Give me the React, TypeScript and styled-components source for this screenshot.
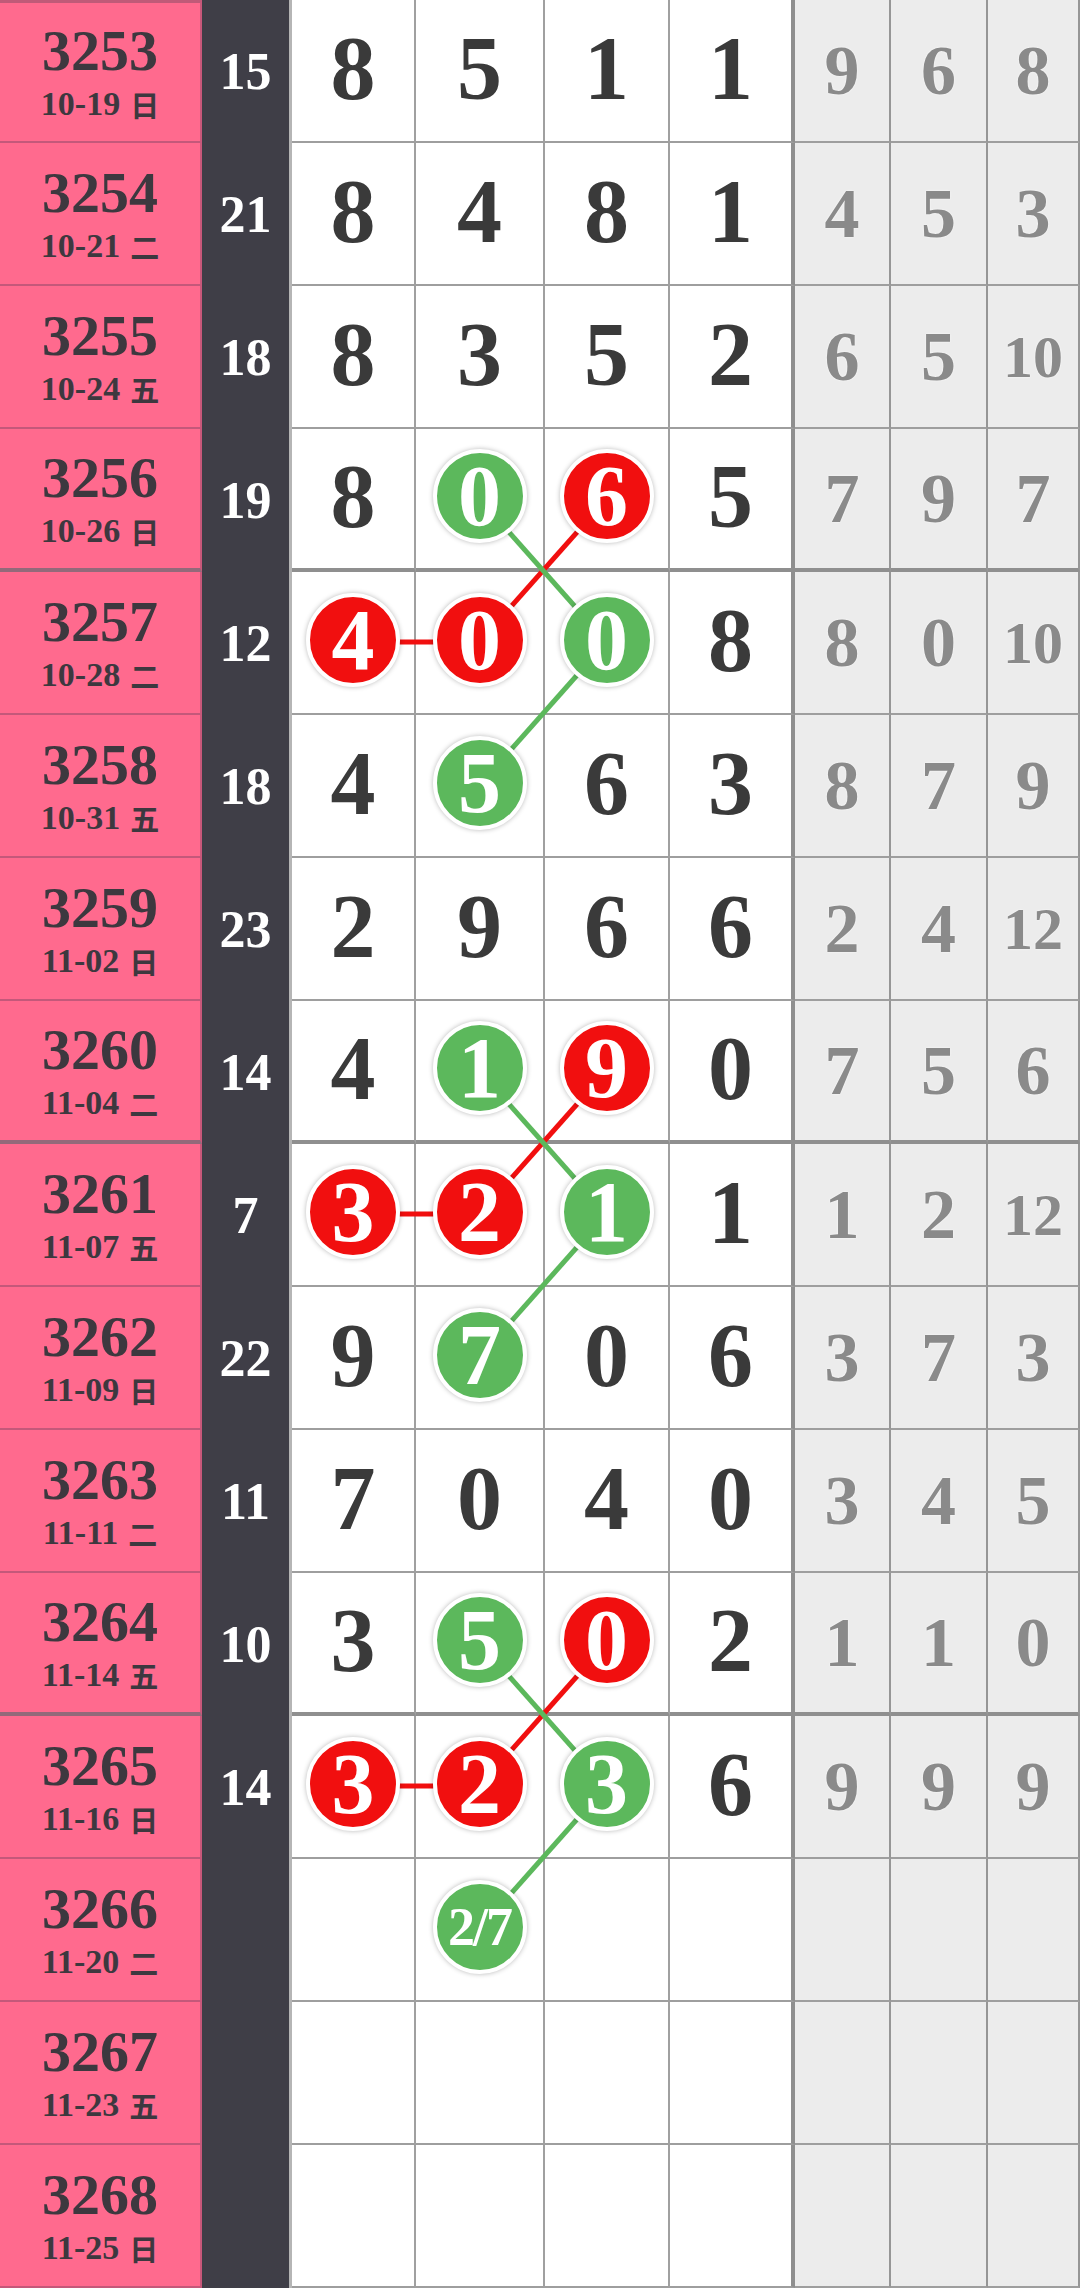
import React from 'react';
import styled, { createGlobalStyle } from 'styled-components';

type Tone = 'red' | 'green';
type Mark = string | { v: string; tone: Tone } | null;

interface Draw {
  period: string;
  date: string;
  week: string;
  sum?: string;
  marks: Mark[];
  miss: string[];
}

const COLS = [202, 90, 124, 129, 125, 125, 96, 97, 92];
const ROW_H = 143;
const GROUP_ENDS = [3, 7, 11];

const r = (v: string): Mark => ({ v, tone: 'red' });
const g = (v: string): Mark => ({ v, tone: 'green' });

const draws: Draw[] = [
  { period: '3253', date: '10-19', week: '日', sum: '15', marks: ['8', '5', '1', '1'], miss: ['9', '6', '8'] },
  { period: '3254', date: '10-21', week: '二', sum: '21', marks: ['8', '4', '8', '1'], miss: ['4', '5', '3'] },
  { period: '3255', date: '10-24', week: '五', sum: '18', marks: ['8', '3', '5', '2'], miss: ['6', '5', '10'] },
  { period: '3256', date: '10-26', week: '日', sum: '19', marks: ['8', g('0'), r('6'), '5'], miss: ['7', '9', '7'] },
  { period: '3257', date: '10-28', week: '二', sum: '12', marks: [r('4'), r('0'), g('0'), '8'], miss: ['8', '0', '10'] },
  { period: '3258', date: '10-31', week: '五', sum: '18', marks: ['4', g('5'), '6', '3'], miss: ['8', '7', '9'] },
  { period: '3259', date: '11-02', week: '日', sum: '23', marks: ['2', '9', '6', '6'], miss: ['2', '4', '12'] },
  { period: '3260', date: '11-04', week: '二', sum: '14', marks: ['4', g('1'), r('9'), '0'], miss: ['7', '5', '6'] },
  { period: '3261', date: '11-07', week: '五', sum: '7', marks: [r('3'), r('2'), g('1'), '1'], miss: ['1', '2', '12'] },
  { period: '3262', date: '11-09', week: '日', sum: '22', marks: ['9', g('7'), '0', '6'], miss: ['3', '7', '3'] },
  { period: '3263', date: '11-11', week: '二', sum: '11', marks: ['7', '0', '4', '0'], miss: ['3', '4', '5'] },
  { period: '3264', date: '11-14', week: '五', sum: '10', marks: ['3', g('5'), r('0'), '2'], miss: ['1', '1', '0'] },
  { period: '3265', date: '11-16', week: '日', sum: '14', marks: [r('3'), r('2'), g('3'), '6'], miss: ['9', '9', '9'] },
  { period: '3266', date: '11-20', week: '二', marks: [null, g('2/7'), null, null], miss: ['', '', ''] },
  { period: '3267', date: '11-23', week: '五', marks: [null, null, null, null], miss: ['', '', ''] },
  { period: '3268', date: '11-25', week: '日', marks: [null, null, null, null], miss: ['', '', ''] },
];

// centres of the four number columns (content box, without right border)
const DIGIT_X = [353, 479.5, 606.5, 731.5];
const rowY = (i: number) => i * ROW_H + 70;

// each group: [from col,row] -> [to col,row]
const links: { a: [number, number]; b: [number, number]; tone: Tone }[] = [3, 7, 11].flatMap((s) => [
  { a: [0, s + 1], b: [1, s + 1], tone: 'red' as Tone },
  { a: [1, s + 1], b: [2, s], tone: 'red' as Tone },
  { a: [1, s], b: [2, s + 1], tone: 'green' as Tone },
  { a: [2, s + 1], b: [1, s + 2], tone: 'green' as Tone },
]);

const TONES: Record<Tone, string> = {
  red: '#f10f0f',
  green: '#5cb85c',
};

export default function App() {
  return (
    <>
      <GlobalStyle />
      <Board>
        {draws.map((d, i) => {
          const end = GROUP_ENDS.includes(i);
          return (
            <Row key={d.period}>
              <Period $end={end} $first={i === 0}>
                <PeriodNo>{d.period}</PeriodNo>
                <DateLine>
                  {d.date}
                  <Week>{d.week}</Week>
                </DateLine>
              </Period>
              <Sum>{d.sum}</Sum>
              {d.marks.map((m, j) => (
                <Digit key={j} $end={end} $last={j === 3}>
                  {m === null ? null : typeof m === 'string' ? (
                    m
                  ) : (
                    <Ball $tone={m.tone} $small={m.v.length > 1}>
                      {m.v}
                    </Ball>
                  )}
                </Digit>
              ))}
              {d.miss.map((m, j) => (
                <Miss key={j} $end={end} $small={m.length > 1}>
                  {m}
                </Miss>
              ))}
            </Row>
          );
        })}
        <Links width={1080} height={ROW_H * draws.length} viewBox={`0 0 1080 ${ROW_H * draws.length}`}>
          {links.map((l, k) => (
            <line
              key={k}
              x1={DIGIT_X[l.a[0]]}
              y1={rowY(l.a[1])}
              x2={DIGIT_X[l.b[0]]}
              y2={rowY(l.b[1])}
              stroke={TONES[l.tone]}
              strokeWidth={5}
            />
          ))}
        </Links>
      </Board>
    </>
  );
}

const GlobalStyle = createGlobalStyle`
  *, *::before, *::after {
    box-sizing: border-box;
  }
  html, body {
    margin: 0;
    padding: 0;
    background: #fff;
  }
  body {
    font-family: "Liberation Serif", "Noto Sans CJK SC", serif;
    font-weight: 700;
  }
`;

const Board = styled.div`
  position: relative;
  width: 1080px;
`;

const Row = styled.div`
  display: grid;
  grid-template-columns: ${COLS.map((c) => `${c}px`).join(' ')};
  height: ${ROW_H}px;
`;

const Cell = styled.div<{ $end: boolean }>`
  display: flex;
  align-items: center;
  justify-content: center;
  border-bottom: ${(p) => (p.$end ? '4px solid #8f8f8f' : '2px solid #9e9e9e')};
`;

const Period = styled(Cell)<{ $first: boolean }>`
  flex-direction: column;
  background: #ff6a8e;
  color: #3d383f;
  border-right: 2px solid #c8587a;
  border-top: ${(p) => (p.$first ? '3px solid #c05a78' : '0')};
  border-bottom: ${(p) => (p.$end ? '4px solid #94697a' : '2px solid #c4587a')};
  padding-top: 2px;
`;

const PeriodNo = styled.div`
  font-size: 58px;
  line-height: 54px;
`;

const DateLine = styled.div`
  display: flex;
  align-items: center;
  font-size: 34px;
  line-height: 36px;
  margin-top: 8px;
`;

const Week = styled.span`
  font-family: "Noto Sans CJK SC", sans-serif;
  font-size: 29px;
  margin-left: 10px;
`;

const Sum = styled.div`
  display: flex;
  align-items: center;
  justify-content: center;
  background: #3f3e47;
  color: #fff;
  font-size: 52px;
  border-right: 3px solid #b5b5b5;
`;

const Digit = styled(Cell)<{ $last: boolean }>`
  background: #fff;
  color: #3a3a3a;
  font-size: 90px;
  line-height: 1;
  border-right: ${(p) => (p.$last ? '4px solid #8f8f8f' : '2px solid #a0a0a0')};
  padding-bottom: 4px;
`;

const Ball = styled.span<{ $tone: Tone; $small: boolean }>`
  position: relative;
  z-index: 2;
  display: flex;
  align-items: center;
  justify-content: center;
  width: 94px;
  height: 94px;
  border-radius: 50%;
  border: 4px solid #fff;
  background: ${(p) => TONES[p.$tone]};
  box-shadow: 0 0 5px rgba(0, 0, 0, 0.28);
  color: #fff;
  font-size: ${(p) => (p.$small ? 54 : 86)}px;
  line-height: 1;
  letter-spacing: ${(p) => (p.$small ? '-2px' : '0')};
  margin-top: -2px;
`;

const Miss = styled(Cell)<{ $small: boolean }>`
  background: #ececec;
  color: #8a8a8a;
  font-size: ${(p) => (p.$small ? 60 : 70)}px;
  line-height: 1;
  border-right: 2px solid #969696;
  text-shadow: 0 0 2px #fff;
`;

const Links = styled.svg`
  position: absolute;
  top: 0;
  left: 0;
  z-index: 1;
  pointer-events: none;
`;
